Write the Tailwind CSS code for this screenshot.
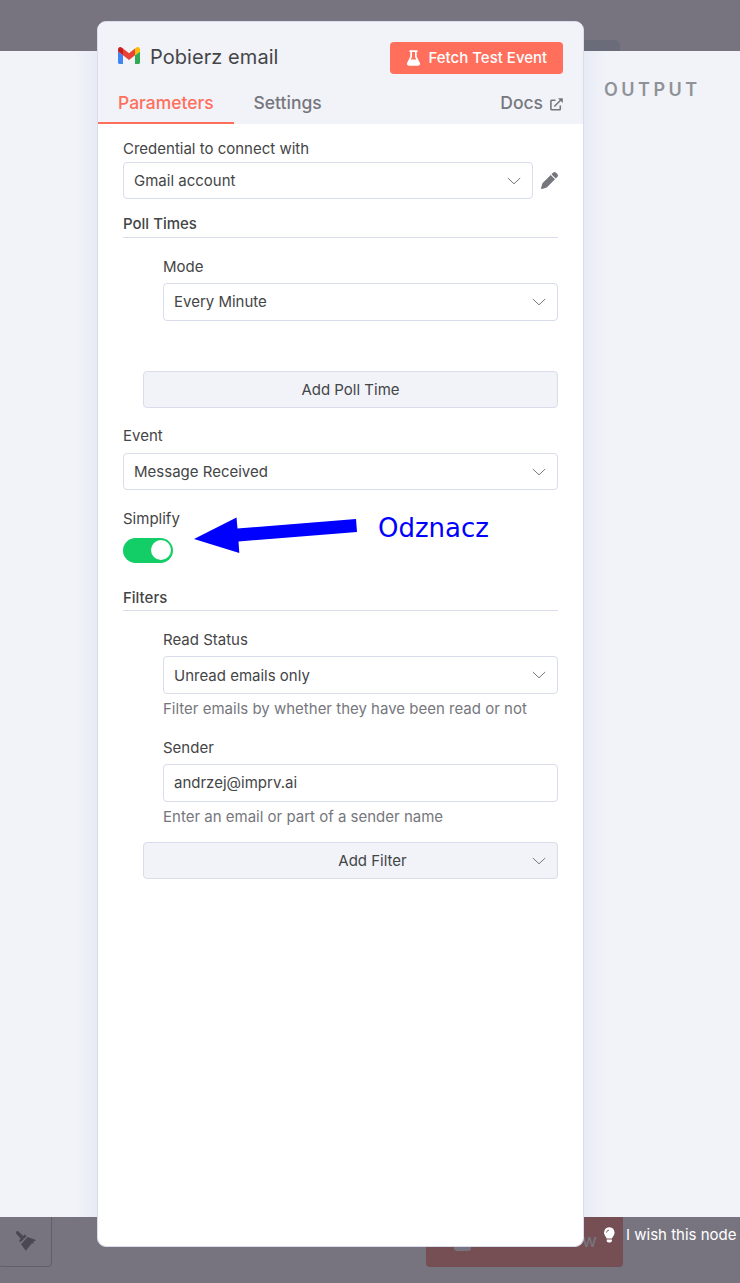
<!DOCTYPE html>
<html lang="pl">
<head>
<meta charset="utf-8">
<title>Pobierz email</title>
<script src="https://cdn.jsdelivr.net/npm/@tailwindcss/browser@4"></script>
</head>
<body class="bg-[#77747f]">
<div class="relative h-[1283px] w-[740px] overflow-hidden bg-[#77747f] font-['Inter',sans-serif] text-[15px] text-[#444546]">
  <!-- dimmed canvas behind the dialog -->
  <div class="absolute left-[500px] top-[40px] h-[30px] w-[120px] rounded-[5px] bg-[#6b6c7a]"></div>
  <div class="absolute -left-[2px] top-[1200px] flex h-[67px] w-[54px] items-end rounded-[4px] border border-[#625f6c]">
    <svg class="mb-[13px] ml-[16px]" width="22" height="23" viewBox="0 0 22 23" fill="#4b4856"><path d="M1.500 1.200 L3 1 L8.200 6 L9.700 4.300 L11.700 6.200 L5.500 12.300 L4 10.600 L5.700 8.700 L0.800 3.200 Z"/><path d="M12.600 6.900 L20.300 9.800 L20.500 11 L18 11.400 L19 13.300 L16.800 13.600 L10.800 20.800 L6 14.200 Z"/></svg>
  </div>
  <div class="absolute left-[426px] top-[1200px] h-[67px] w-[197px] rounded-[4px] bg-[#764f55]">
    <div class="absolute left-[28px] top-[35px] h-[16px] w-[17px] rounded-[3px] bg-[#77747f]"></div>
    <div class="absolute right-[26px] top-[29px] text-[18px] font-medium leading-6 text-[#77747f]">w</div>
  </div>

  <!-- data panels -->
  <div class="absolute left-0 top-[51px] flex h-[1166px] w-[740px] justify-end bg-[#f1f3f9]">
    <div class="absolute left-[75px] top-0 h-full w-[22px] bg-linear-to-r from-[#f1f3f9] to-[#e8ebf4]"></div>
    <div class="absolute left-[584px] top-0 h-full w-[22px] bg-linear-to-r from-[#e7ebf4] to-[#f1f3f9]"></div>
    <div class="relative w-[136px] pt-[27px] text-[18px] font-semibold leading-6 tracking-[3.5px] text-[#909298]">OUTPUT</div>
  </div>

  <div class="absolute left-[603px] top-[1223px] flex h-6 items-center whitespace-nowrap text-[15px] text-white">
    <svg width="13" height="16" viewBox="0 0 13 16" fill="#fff"><path d="M6.300.3a5.300 5.300 0 0 0-4.300 8.400c.8 1.100 1.400 1.800 1.700 2.900h5.200c.3-1.100.9-1.800 1.700-2.900A5.300 5.300 0 0 0 6.300.3Z"/><path d="M3.700 12.500h5.200v1.200a1.800 1.800 0 0 1-1.800 1.700H5.500a1.800 1.800 0 0 1-1.800-1.700Z"/><path d="M3.500 5.600a2.700 2.700 0 0 1 2.600-2.500" fill="none" stroke="#77545a" stroke-width=".9"/></svg>
    <span class="ml-[10px]">I wish this node</span>
  </div>

  <!-- node dialog -->
  <main class="absolute left-[97px] top-[21px] flex h-[1226px] w-[487px] flex-col overflow-hidden rounded-[9px] border border-[#d9dcea] bg-white">
    <header class="flex h-[102px] flex-col bg-[#f1f3f9] pt-5">
      <div class="flex h-8 items-center pl-5 pr-5">
        <svg class="mb-[5px]" width="22" height="17" viewBox="52 42 88 66" preserveAspectRatio="none"><path fill="#4285f4" d="M58 108h14V74L52 59v43c0 3.320 2.690 6 6 6"/><path fill="#34a853" d="M120 108h14c3.320 0 6-2.690 6-6V59l-20 15"/><path fill="#fbbc04" d="M120 48v26l20-15v-8c0-7.420-8.470-11.650-14.400-7.200"/><path fill="#ea4335" d="M72 74V48l24 18 24-18v26L96 92"/><path fill="#c5221f" d="M52 51v8l20 15V48l-5.600-4.200c-5.940-4.450-14.400-.22-14.400 7.200"/></svg>
        <h1 class="ml-[10px] mt-[-2px] text-[20px] leading-8 tracking-[0.06px]">Pobierz email</h1>
        <button class="ml-auto flex h-8 w-[173px] items-center rounded-[4px] bg-[#ff6f5c] pl-[17px] text-[15px] font-medium text-white">
          <svg width="13" height="16" viewBox="0 0 13 16" fill="#fff"><path fill-rule="evenodd" d="M2.500 .3H10.500V2H9.700V6.500L12.700 12.600C13.500 14.200 12.700 15.700 11 15.700H2C.3 15.700-.5 14.200.3 12.600L3.300 6.500V2H2.500ZM5 2V6.900L3.700 9.600H9.300L8 6.900V2Z"/></svg>
          <span class="ml-[8.500px] pt-px ml-[8.5px]">Fetch Test Event</span>
        </button>
      </div>
      <nav class="flex h-[50px] text-[17.5px] font-medium leading-6 text-[#76777d]">
        <div class="w-[136px] border-b-2 border-[#ff6f5c] pl-5 pt-[17px] text-[#ff6f5c]"><span>Parameters</span></div>
        <div class="pl-[19.5px] pt-[17px]"><span>Settings</span></div>
        <div class="ml-auto flex items-start pr-5 pt-[17px]"><span>Docs</span>
          <svg class="ml-[7px] mt-[7px]" width="13" height="13" viewBox="0 0 13 13" fill="none" stroke="#76777d" stroke-width="1.600"><path d="M5.500 2.300H1.600a.7.700 0 0 0-.7.700V11a.7.700 0 0 0 .7.700H9.600a.7.700 0 0 0 .7-.7V7.500M4.300 8.500L10.800 2"/><path d="M8 .3H12.800V5Z" fill="#76777d" stroke="none"/></svg>
        </div>
      </nav>
    </header>

    <section class="flex flex-col px-[25px] pt-[13px] leading-6">
      <div class="h-[25px]"><span>Credential to connect with</span></div>
      <div class="flex items-center">
        <div class="flex h-[37px] w-[410px] shrink-0 items-center justify-between rounded-[4px] border border-[#d9dcea] pl-[10px] pr-[11px]"><span>Gmail account</span>
          <svg width="14" height="8" viewBox="0 0 14 8" fill="none" stroke="#76777d" stroke-width="1"><path d="M.8 1L7 6.800L13.200 1"/></svg></div>
        <svg class="ml-2 shrink-0" width="17" height="17" viewBox="0 0 512 512" fill="#76777d"><path d="M362.700 19.300L314.300 67.700 444.300 197.700l48.400-48.400c25-25 25-65.500 0-90.500L453.300 19.300c-25-25-65.500-25-90.500 0zm-71 71L58.600 323.500c-10.400 10.400-18 23.300-22.200 37.400L1 481.200C-1.500 489.700.8 498.800 7 505s15.300 8.500 23.700 6.100l120.300-35.400c14.100-4.200 27-11.800 37.400-22.200L421.700 220.300z"/></svg>
      </div>
      <h2 class="mt-[13px] h-[26px] border-b border-[#d9dcea] font-medium"><span>Poll Times</span></h2>

      <div class="mt-[17px] pl-10">
        <div class="h-[28px]"><span>Mode</span></div>
        <div class="flex h-[38px] items-center justify-between rounded-[4px] border border-[#d9dcea] pl-[10px] pr-[11px]"><span>Every Minute</span>
          <svg width="14" height="8" viewBox="0 0 14 8" fill="none" stroke="#76777d"><path d="M.8 1L7 6.800L13.200 1"/></svg></div>
      </div>
      <button class="ml-5 mt-[50px] h-[37px] rounded-[4px] border border-[#d9dcea] bg-[#f1f3f9]"><span>Add Poll Time</span></button>

      <div class="mt-[16px] h-[29px]"><span>Event</span></div>
      <div class="flex h-[37px] items-center justify-between rounded-[4px] border border-[#d9dcea] pl-[10px] pr-[11px]"><span>Message Received</span>
        <svg width="14" height="8" viewBox="0 0 14 8" fill="none" stroke="#76777d"><path d="M.8 1L7 6.800L13.200 1"/></svg></div>

      <div class="mt-[17px] h-[31px]"><span>Simplify</span></div>
      <div class="flex h-[25px] w-[50px] justify-end rounded-full bg-[#13ce66] pr-[2px] pt-[2px]"><div class="size-5 rounded-full bg-white"></div></div>

      <h2 class="mt-[23px] h-[25px] border-b border-[#d9dcea] font-medium"><span>Filters</span></h2>

      <div class="mt-[17px] flex flex-col pl-10">
        <div class="h-[28px]"><span>Read Status</span></div>
        <div class="flex h-[38px] items-center justify-between rounded-[4px] border border-[#d9dcea] pl-[10px] pr-[11px]"><span class="pt-[2px]">Unread emails only</span>
          <svg width="14" height="8" viewBox="0 0 14 8" fill="none" stroke="#76777d"><path d="M.8 1L7 6.800L13.200 1"/></svg></div>
        <div class="mt-[3px] whitespace-nowrap text-[#76777d]"><span>Filter emails by whether they have been read or not</span></div>
        <div class="mt-[15px] h-[28px]"><span>Sender</span></div>
        <div class="flex h-[38px] items-center rounded-[4px] border border-[#d9dcea] pl-[10px]"><span>andrzej@imprv.ai</span></div>
        <div class="mt-[3px] text-[#76777d]"><span>Enter an email or part of a sender name</span></div>
      </div>
      <button class="ml-5 mt-[13px] flex h-[37px] items-center rounded-[4px] border border-[#d9dcea] bg-[#f1f3f9] pl-[69px] pr-[11px]"><span class="flex-1">Add Filter</span>
        <svg width="14" height="8" viewBox="0 0 14 8" fill="none" stroke="#76777d"><path d="M.8 1L7 6.800L13.200 1"/></svg></button>
    </section>
  </main>

  <!-- annotation -->
  <svg class="absolute left-[190px] top-[510px]" width="175" height="50" viewBox="190 510 175 50"><path fill="#00f" d="M194 539L236.500 517.500L237.500 528.500L356 519L357 532L238.500 541.500L239.300 553Z"/></svg>
  <div class="absolute left-[378px] top-[512px] font-['DejaVu_Sans',sans-serif] text-[26px] leading-8 text-[#00f]">Odznacz</div>
</div>
</body>
</html>
